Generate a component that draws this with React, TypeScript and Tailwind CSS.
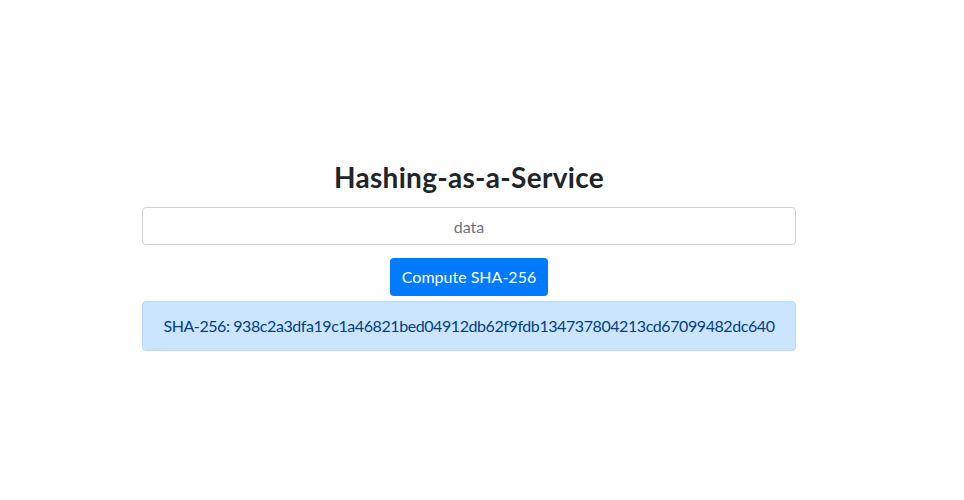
import React from "react";

export default function App() {
  return (
    <div className="min-h-[500px] w-full bg-white text-[#212529]" style={{ fontFamily: 'Lato, "Open Sans", sans-serif' }}>
      <div className="ml-[142px] w-[654px] pt-[160px] flex flex-col items-center">
        <h3 className="text-[28px] leading-[34px] font-bold tracking-[0.3px] text-[#212529]">Hashing-as-a-Service</h3>
        <input
          className="mt-[13px] w-full h-[38px] rounded border border-[#ced4da] px-3 text-center text-base text-[#495057] placeholder:text-[#6c757d] outline-none"
          placeholder="data"
        />
        <button className="mt-[13px] h-[38px] rounded bg-[#007bff] px-3 text-base leading-6 text-white">
          Compute SHA-256
        </button>
        <div className="mt-[5px] w-full rounded border border-[#b8daff] bg-[#cce5ff] px-5 py-3 text-center text-base leading-6 tracking-[-0.42px] text-[#004085] whitespace-nowrap">
          SHA-256: 938c2a3dfa19c1a46821bed04912db62f9fdb134737804213cd67099482dc640
        </div>
      </div>
    </div>
  );
}
